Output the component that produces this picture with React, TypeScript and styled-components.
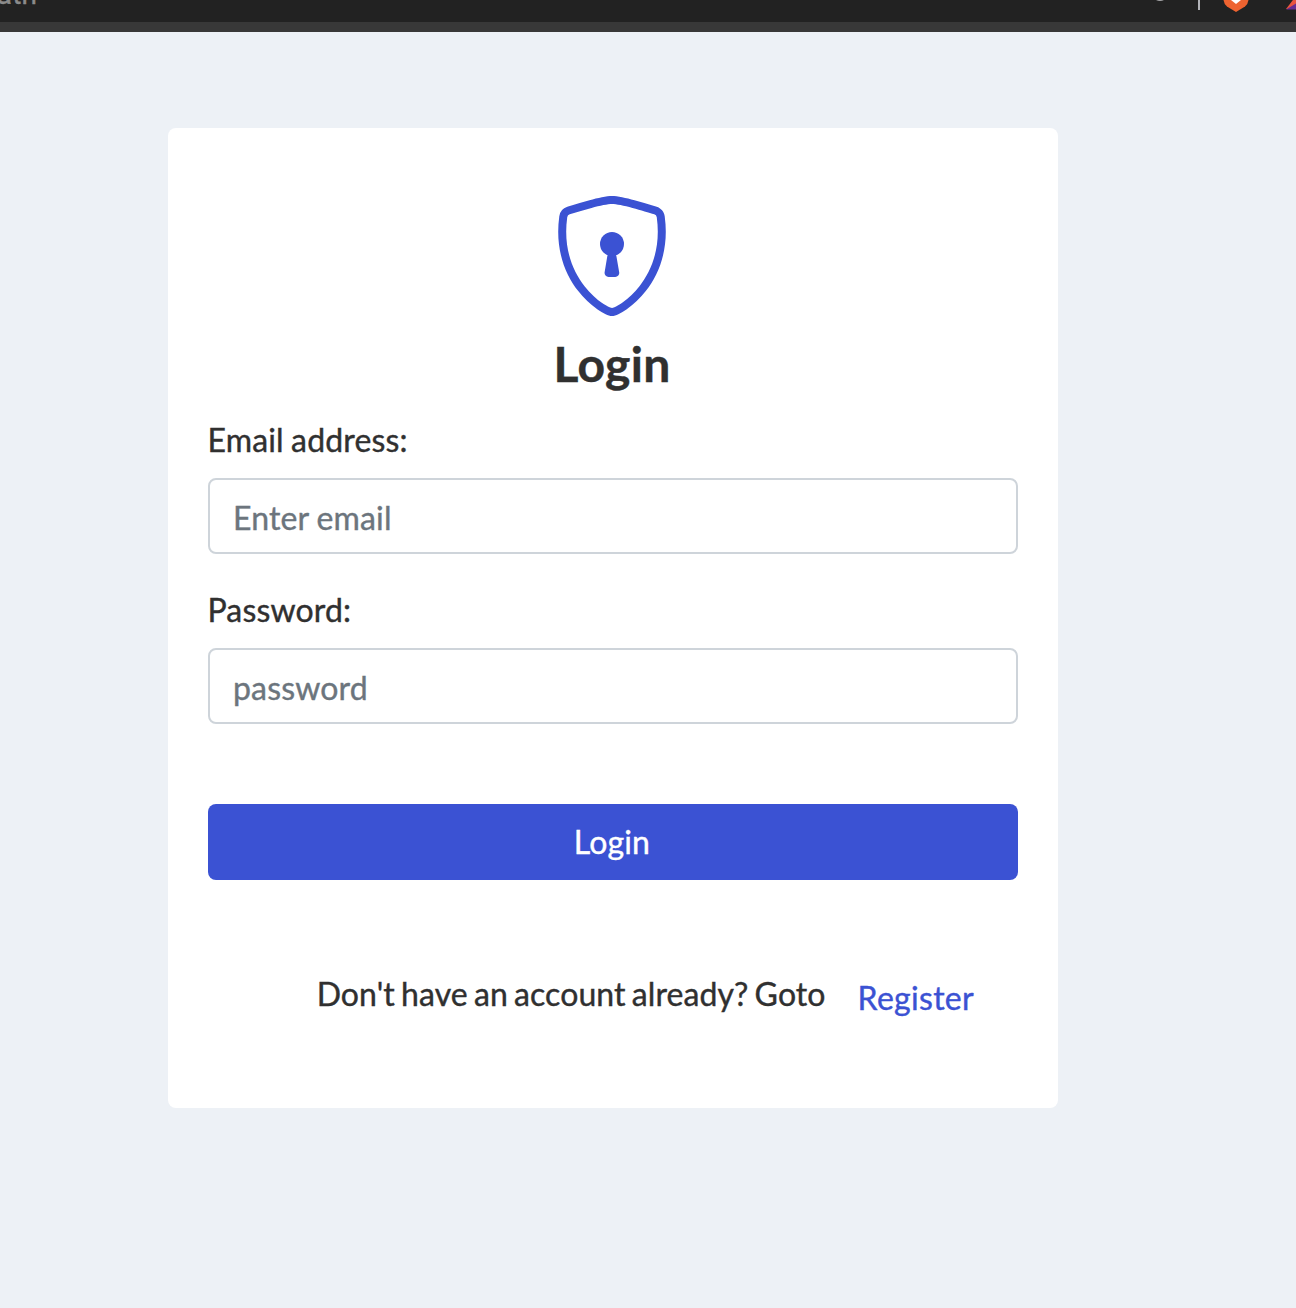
import React from "react";
import styled, { createGlobalStyle } from "styled-components";

const GlobalStyle = createGlobalStyle`
  *, *::before, *::after { box-sizing: border-box; }
  html, body { margin: 0; background: #edf1f6; }
  body {
    font-family: Lato, "Liberation Sans", sans-serif;
    font-size: 32px;
    line-height: 48px;
    letter-spacing: 0.15px;
    word-spacing: -1px;
    color: #303030;
    -webkit-text-stroke: 0.4px currentColor;
    overflow: hidden;
  }
`;

const Page = styled.div`
  display: flex;
  flex-direction: column;
  height: 1308px;
  background: #edf1f6;
`;

const BrowserBar = styled.header`
  display: flex;
  justify-content: space-between;
  flex: none;
  height: 32px;
  overflow: hidden;
  background: #222222;
  border-bottom: 10px solid #383838;
`;

const Address = styled.span`
  margin: -29px 0 0 -19px;
  font-family: Roboto, sans-serif;
  font-size: 28px;
  letter-spacing: 0.1px;
  color: #8b8b8b;
`;

const BarIcons = styled.svg`
  flex: none;
  display: block;
`;

const Card = styled.main`
  display: flex;
  flex-direction: column;
  width: 890px;
  height: 980px;
  margin: 96px 0 0 168px;
  padding: 64px 40px 0;
  border-radius: 8px;
  background: #ffffff;
`;

const Shield = styled.svg`
  align-self: center;
  flex: none;
  width: 128px;
  height: 128px;
  margin-right: 2px;
  fill: #3b52d3;
`;

const Title = styled.h1`
  margin: 15px 2px 23px 0;
  font-size: 48px;
  font-weight: 700;
  line-height: 58px;
  letter-spacing: 0.3px;
  text-align: center;
`;

const Field = styled.div`
  display: flex;
  flex-direction: column;
  gap: 14px;
  margin-bottom: 32px;
`;

const Label = styled.label`
  align-self: flex-start;
  margin-left: -0.5px;
`;

const Input = styled.input`
  width: 100%;
  height: 76px;
  padding: 2px 23px 0;
  border: 2px solid #ced4da;
  border-radius: 8px;
  outline: none;
  background: #ffffff;
  color: #303030;
  font: inherit;
  letter-spacing: inherit;
  word-spacing: -0.5px;
  &::placeholder { color: #6c757d; opacity: 1; }
`;

const Submit = styled.button`
  height: 76px;
  margin-top: 48px;
  padding: 0 2px 0 0;
  border: 0;
  border-radius: 8px;
  background: #3b52d3;
  color: #ffffff;
  font: inherit;
  letter-spacing: 0.15px;
`;

const Footer = styled.p`
  display: flex;
  justify-content: flex-end;
  margin: 90px 44px 0 0;
  letter-spacing: 0.1px;
  word-spacing: -2.2px;
  white-space: nowrap;
`;

const RegisterLink = styled.a`
  margin-left: 32px;
  padding-top: 4px;
  letter-spacing: 0.3px;
  color: #3b52d3;
  text-decoration: none;
`;

export default function App() {
  return (
    <>
      <GlobalStyle />
      <Page>
        <BrowserBar>
          <Address>path</Address>
          <BarIcons width="166" height="22" viewBox="0 0 166 22" aria-hidden="true">
            <path d="M26 0h8q-4 2-8 0z" fill="#a8a8aa" />
            <path d="M68 0h2v10h-2z" fill="#b2b3b8" />
            <path d="M93.5 0h25q-.5 4-3.500 6.500L106 12l-9-5.500Q94 4 93.500 0z" fill="#ee6330" />
            <path d="M101 0h10l-5 4z" fill="#fff" />
            <path d="M166-4v13h-10z" fill="#e9543d" />
            <path d="M156 9.500l10-6v6z" fill="#662d91" />
          </BarIcons>
        </BrowserBar>
        <Card>
          <Shield viewBox="0 0 16 16" aria-hidden="true">
            <path
              fillRule="evenodd"
              d="M5.443 1.991a60.17 60.17 0 0 0-2.725.802.454.454 0 0 0-.315.366C1.87 7.056 3.1 9.9 4.567 11.773c.736.94 1.533 1.636 2.197 2.093.333.228.626.394.857.5.116.053.21.089.282.11A.73.73 0 0 0 8 14.5c.007-.001.038-.005.097-.023.072-.022.166-.058.282-.111.23-.106.525-.272.857-.5a10.197 10.197 0 0 0 2.197-2.093C12.9 9.9 14.13 7.056 13.597 3.159a.454.454 0 0 0-.315-.366c-.626-.2-1.682-.526-2.725-.802C9.491 1.71 8.51 1.5 8 1.5c-.51 0-1.49.21-2.557.491zm-.256-.966C6.23.749 7.337.5 8 .5c.662 0 1.77.249 2.813.525a61.09 61.09 0 0 1 2.772.815c.528.168.926.623 1.003 1.184.573 4.197-.756 7.307-2.367 9.365a11.191 11.191 0 0 1-2.418 2.3 6.942 6.942 0 0 1-1.007.586c-.27.124-.558.225-.796.225s-.526-.101-.796-.225a6.908 6.908 0 0 1-1.007-.586 11.192 11.192 0 0 1-2.417-2.3C2.167 10.331.839 7.221 1.412 3.024A1.454 1.454 0 0 1 2.415 1.84a61.11 61.11 0 0 1 2.772-.815z"
            />
            <path d="M9.5 6.5a1.5 1.5 0 1 1-3 0 1.5 1.5 0 0 1 3 0z" />
            <path d="M7.411 8.034a.5.5 0 0 1 .493-.417h.156a.5.5 0 0 1 .492.414l.347 2a.5.5 0 0 1-.493.585h-.835a.5.5 0 0 1-.493-.582l.333-2z" />
          </Shield>
          <Title>Login</Title>
          <Field>
            <Label htmlFor="email">Email address:</Label>
            <Input id="email" type="email" placeholder="Enter email" />
          </Field>
          <Field>
            <Label htmlFor="password">Password:</Label>
            <Input id="password" type="password" placeholder="password" />
          </Field>
          <Submit type="button">Login</Submit>
          <Footer>
            Don't have an account already? Goto
            <RegisterLink href="#">Register</RegisterLink>
          </Footer>
        </Card>
      </Page>
    </>
  );
}
